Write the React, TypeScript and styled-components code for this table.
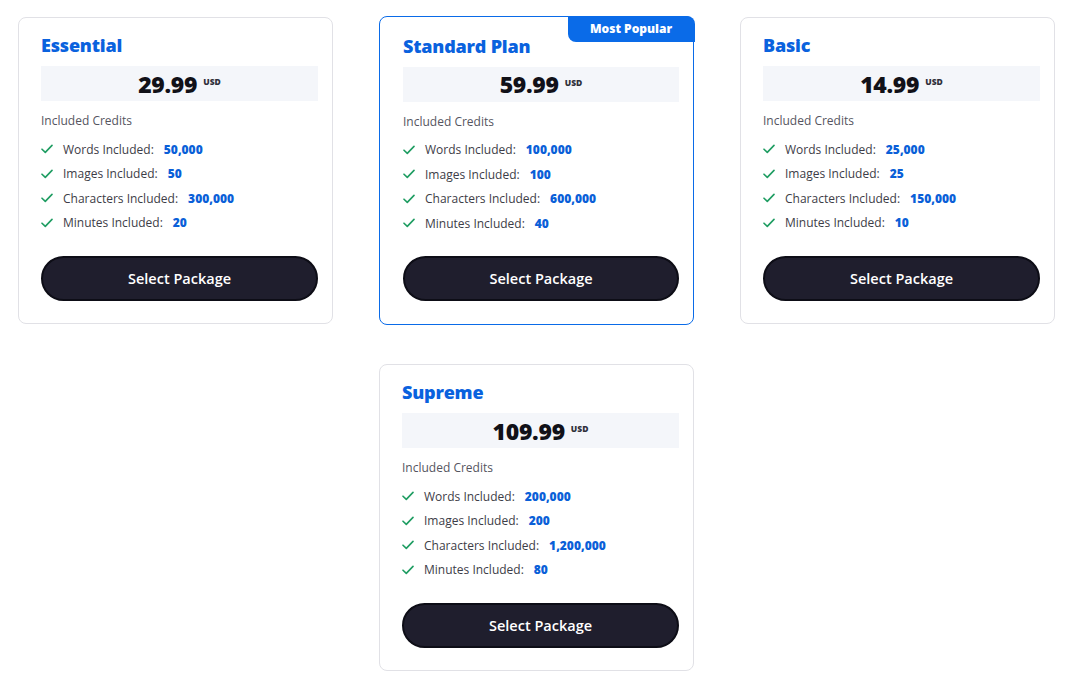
import React from "react";
import styled, { createGlobalStyle } from "styled-components";

const Global = createGlobalStyle`
  html, body { margin: 0; padding: 0; background: #ffffff; }
  body { font-family: "Open Sans", "Liberation Sans", sans-serif; color: #3a3a44; }
  * { box-sizing: border-box; }
`;

const Page = styled.div`
  padding: 17px 0 0 18px;
  display: grid;
  grid-template-columns: repeat(3, 315px);
  column-gap: 46px;
  row-gap: 39px;
  align-items: start;
`;

const Card = styled.div<{ $featured?: boolean; $col?: number }>`
  position: relative;
  grid-column: ${(p) => p.$col ?? "auto"};
  border: ${(p) => (p.$featured ? "1.5px solid #0a6be8" : "1px solid #e1e1e6")};
  border-radius: 8px;
  background: #fff;
  padding: ${(p) => (p.$featured ? "17.5px 14px 23px 23px" : "16px 14px 22px 22px")};
  margin-top: ${(p) => (p.$featured ? "-1px" : "0")};
  display: flex;
  flex-direction: column;
`;

const Badge = styled.div`
  position: absolute;
  top: -1.5px;
  right: -1.5px;
  width: 127px;
  height: 26px;
  background: #0a6be8;
  color: #fff;
  font-weight: 800;
  font-size: 12px;
  display: flex;
  align-items: center;
  justify-content: center;
  border-radius: 0 8px 0 8px;
`;

const Title = styled.h2`
  margin: 0;
  font-size: 18px;
  font-weight: 800;
  color: #0a62de;
  line-height: 22px;
  letter-spacing: -0.2px;
`;

const PriceBox = styled.div`
  margin-top: 10px;
  height: 35px;
  background: #f4f6fa;
  display: flex;
  align-items: center;
  justify-content: center;
  gap: 6px;
`;

const Price = styled.span`
  font-size: 23px;
  font-weight: 800;
  color: #111118;
  letter-spacing: -0.3px;
`;

const Currency = styled.span`
  font-size: 8.5px;
  font-weight: 800;
  color: #30303a;
  align-self: flex-start;
  margin-top: 10px;
`;

const SectionLabel = styled.div`
  margin-top: 12px;
  font-size: 12px;
  color: #55555f;
  line-height: 16px;
`;

const List = styled.ul`
  list-style: none;
  margin: 12px 0 0 0;
  padding: 0;
  display: flex;
  flex-direction: column;
  gap: 8.5px;
`;

const Item = styled.li`
  display: flex;
  align-items: center;
  height: 16px;
  font-size: 12px;
`;

const Check = styled.svg`
  width: 12px;
  height: 10px;
  margin-right: 10px;
  flex-shrink: 0;
`;

const Label = styled.span`
  color: #3d3d47;
`;

const Value = styled.span`
  margin-left: 10px;
  color: #0a5fd8;
  font-weight: 800;
`;

const Button = styled.button`
  margin-top: 25px;
  height: 45px;
  width: 100%;
  border-radius: 23px;
  background: #1f1e2d;
  border: 2px solid #0d0d16;
  color: #fff;
  font-family: "Open Sans", "Liberation Sans", sans-serif;
  font-size: 14.5px;
  font-weight: 600;
  cursor: pointer;
`;

type Plan = {
  name: string;
  price: string;
  words: string;
  images: string;
  chars: string;
  minutes: string;
  featured?: boolean;
  col?: number;
};

const plans: Plan[] = [
  { name: "Essential", price: "29.99", words: "50,000", images: "50", chars: "300,000", minutes: "20" },
  { name: "Standard Plan", price: "59.99", words: "100,000", images: "100", chars: "600,000", minutes: "40", featured: true },
  { name: "Basic", price: "14.99", words: "25,000", images: "25", chars: "150,000", minutes: "10" },
  { name: "Supreme", price: "109.99", words: "200,000", images: "200", chars: "1,200,000", minutes: "80", col: 2 },
];

const CheckIcon = () => (
  <Check viewBox="0 0 12 10" fill="none">
    <path d="M1 5.2 L4.3 8.4 L11 1.4" stroke="#1f9d62" strokeWidth="1.6" strokeLinecap="round" strokeLinejoin="round" />
  </Check>
);

const Feature = ({ label, value }: { label: string; value: string }) => (
  <Item>
    <CheckIcon />
    <Label>{label}</Label>
    <Value>{value}</Value>
  </Item>
);

export default function App() {
  return (
    <>
      <Global />
      <Page>
        {plans.map((p) => (
          <Card key={p.name} $featured={p.featured} $col={p.col}>
            {p.featured && <Badge>Most Popular</Badge>}
            <Title>{p.name}</Title>
            <PriceBox>
              <Price>{p.price}</Price>
              <Currency>USD</Currency>
            </PriceBox>
            <SectionLabel>Included Credits</SectionLabel>
            <List>
              <Feature label="Words Included:" value={p.words} />
              <Feature label="Images Included:" value={p.images} />
              <Feature label="Characters Included:" value={p.chars} />
              <Feature label="Minutes Included:" value={p.minutes} />
            </List>
            <Button>Select Package</Button>
          </Card>
        ))}
      </Page>
    </>
  );
}
